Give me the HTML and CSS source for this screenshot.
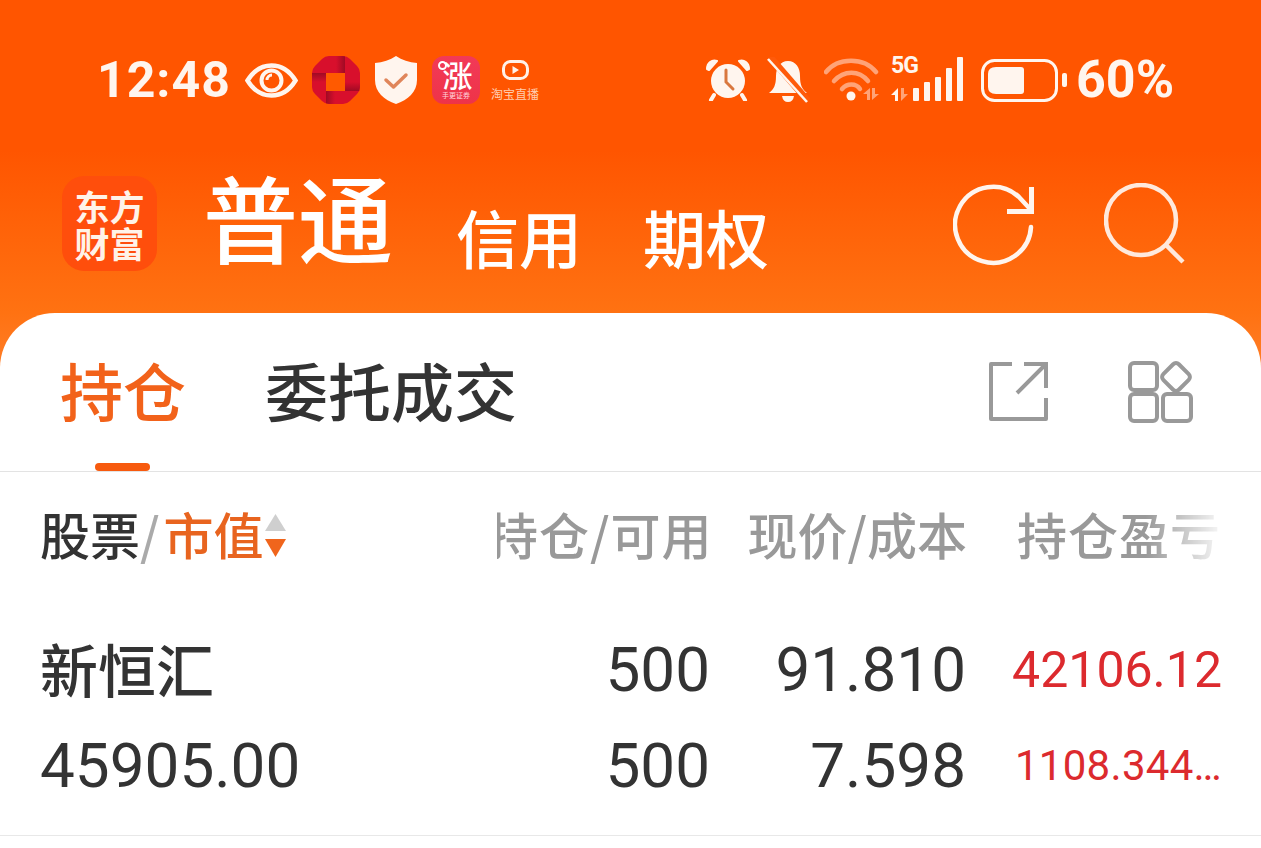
FILE: index.html
```html
<!DOCTYPE html>
<html lang="zh-CN">
<head>
<meta charset="utf-8">
<title>持仓</title>
<link rel="stylesheet" href="styles.css">
</head>
<body>
<div class="app">
  <header class="top">
    <div class="status">
      <div class="status-left">
        <span class="time">12:48</span>
        <svg class="i-eye" viewBox="0 0 53 35"><path d="M2.500 17.500C9 7 17 2.500 26.500 2.500S44 7 50.500 17.500C44 28 36 32.500 26.500 32.500S9 28 2.500 17.500Z" fill="none" stroke="#fff5ee" stroke-width="4.500"/><circle cx="26.500" cy="17.500" r="10" fill="none" stroke="#fff5ee" stroke-width="4"/><path d="M22 17a5 5 0 0 1 5-5" fill="none" stroke="#fff5ee" stroke-width="3"/></svg>
        <svg class="i-bank" viewBox="0 0 48 48">
          <defs>
            <clipPath id="bk-clip"><path d="M17 0H31Q35 0 38 3L45 10Q48 13 48 17V31Q48 35 45 38L38 45Q35 48 31 48H17Q13 48 10 45L3 38Q0 35 0 31V17Q0 13 3 10L10 3Q13 0 17 0Z"/></clipPath>
            <linearGradient id="bk-h" x1="0" y1="0" x2="1" y2="0"><stop offset="0" stop-color="#a00a24" stop-opacity="0"/><stop offset="1" stop-color="#a00a24"/></linearGradient>
            <linearGradient id="bk-h2" x1="0" y1="0" x2="1" y2="0"><stop offset="0" stop-color="#a00a24"/><stop offset="1" stop-color="#a00a24" stop-opacity="0"/></linearGradient>
            <linearGradient id="bk-v" x1="0" y1="0" x2="0" y2="1"><stop offset="0" stop-color="#a00a24" stop-opacity="0"/><stop offset="1" stop-color="#a00a24"/></linearGradient>
            <linearGradient id="bk-v2" x1="0" y1="0" x2="0" y2="1"><stop offset="0" stop-color="#a00a24"/><stop offset="1" stop-color="#a00a24" stop-opacity="0"/></linearGradient>
          </defs>
          <g clip-path="url(#bk-clip)">
            <rect width="48" height="48" fill="#d80f2c"/>
            <rect x="24" y="0" width="9" height="17" fill="url(#bk-h)"/>
            <rect x="33" y="26" width="15" height="9" fill="url(#bk-v)"/>
            <rect x="14" y="35" width="9" height="13" fill="url(#bk-h2)"/>
            <rect x="0" y="17" width="14" height="9" fill="url(#bk-v2)"/>
          </g>
          <rect class="bank-hole" x="14" y="17" width="19" height="18"/>
        </svg>
        <svg class="i-shield" viewBox="0 0 42 48"><path d="M21 0C27 4 34 6.500 42 7V24C42 36 33 44 21 48C9 44 0 36 0 24V7C8 6.500 15 4 21 0Z" fill="#fff5ee"/><path d="M11 24L18.500 31L31 19" fill="none" stroke="#e0855a" stroke-width="3.500" stroke-linecap="round" stroke-linejoin="round"/></svg>
        <div class="zhang"><span class="zhang-dot"></span><span class="zhang-big">涨</span><span class="zhang-small">手更证券</span></div>
        <div class="taobao">
          <svg class="i-live" viewBox="0 0 27 20"><rect x="1.500" y="1.500" width="24" height="17" rx="7" fill="none" stroke="#fff1e8" stroke-width="3"/><path d="M10.500 6L17 10L10.500 14Z" fill="#fff1e8"/></svg>
          <span class="taobao-text">淘宝直播</span>
        </div>
      </div>
      <div class="status-right">
        <svg class="i-clock" viewBox="0 0 44 42"><path d="M1 10C1 4 6 0 11 2L3 11Z M43 10C43 4 38 0 33 2L41 11Z" fill="#fff5ee" stroke="#fff5ee" stroke-width="2" stroke-linejoin="round"/><circle cx="22" cy="22" r="17" fill="#fff5ee"/><path d="M8 36L5 41M36 36L39 41" stroke="#fff5ee" stroke-width="4" stroke-linecap="round"/><path d="M20 11V23L27 30" fill="none" stroke="#d9773e" stroke-width="3" stroke-linecap="round"/></svg>
        <svg class="i-bell" viewBox="0 0 44 46"><path d="M22 4C30 4 34 11 34 19C34 28 36 32 41 36H3C8 32 10 28 10 19C10 11 14 4 22 4Z" fill="#fff5ee"/><path d="M16 39H28Q27 45 22 45T16 39Z" fill="#fff5ee"/><path d="M4 0L42 44" stroke="#ff5a0a" stroke-width="7"/><path d="M2 2L41 45" stroke="#fff5ee" stroke-width="2.600"/></svg>
        <svg class="i-wifi" viewBox="0 0 55 44"><g fill="none" stroke="#ffa377" stroke-width="4.500" stroke-linecap="round"><path d="M2 14C14 -1 40 -1 52 14"/><path d="M10 23C20 12 35 12 44 23"/><path d="M18 31C23 25 32 25 36 31"/></g><circle cx="27" cy="38" r="4.500" fill="#fff5ee"/><path d="M46 30V42H43V36H39ZM48 42V30H51V36H55Z" fill="#ffa377"/></svg>
        <div class="cell">
          <span class="cell-5g">5G</span>
          <svg class="i-cell" viewBox="0 0 72 45"><path d="M7 31V44H4V38H0Z" fill="#fff5ee"/><path d="M10 44V31H13V37H17Z" fill="#ffa377"/><g fill="#fff5ee"><rect x="22" y="31" width="6" height="13" rx="1"/><rect x="33" y="25" width="6" height="19" rx="1"/><rect x="44" y="20" width="6" height="24" rx="1"/><rect x="55" y="11" width="6" height="33" rx="1"/><rect x="66" y="0" width="6" height="44" rx="1"/></g></svg>
        </div>
        <svg class="i-batt" viewBox="0 0 87 43"><rect x="1.500" y="1.500" width="74" height="40" rx="12" fill="none" stroke="#fff5ee" stroke-width="3"/><path d="M15 8H40Q43 8 43 11V32Q43 35 40 35H15Q7 35 7 28V15Q7 8 15 8Z" fill="#fff5ee"/><rect x="81" y="14" width="5" height="14" rx="2" fill="#fff5ee"/></svg>
        <span class="pct">60%</span>
      </div>
    </div>
    <nav class="nav">
      <div class="logo"><span>东方</span><span>财富</span></div>
      <span class="nav-main">普通</span>
      <span class="nav-sub nav-credit">信用</span>
      <span class="nav-sub nav-option">期权</span>
      <div class="nav-icons">
        <svg class="i-refresh" viewBox="0 0 82 83"><path d="M78 44A38 38 0 1 1 66 14L78 27" fill="none" stroke="#fff5ee" stroke-width="4.500" stroke-linecap="round"/><path d="M78.500 4V28.500H54" fill="none" stroke="#fff5ee" stroke-width="5"/></svg>
        <svg class="i-search" viewBox="0 0 81 81"><circle cx="37" cy="37" r="35" fill="none" stroke="#ffe9dc" stroke-width="4.500"/><path d="M62 62L79 79" stroke="#ffe9dc" stroke-width="4.500"/></svg>
      </div>
    </nav>
  </header>

  <main class="panel">
    <div class="tabs">
      <div class="tab tab-on">持仓<span class="tab-bar"></span></div>
      <div class="tab">委托成交</div>
      <div class="tab-icons">
        <svg class="i-share" viewBox="0 0 61 61"><path d="M24 3H3V58H58V37" fill="none" stroke="#999" stroke-width="4" stroke-linejoin="round"/><path d="M36 3H58V27M58 3L29 32" fill="none" stroke="#999" stroke-width="4"/></svg>
        <svg class="i-apps" viewBox="0 0 65 62"><g fill="none" stroke="#999" stroke-width="4"><rect x="2" y="2" width="27" height="27" rx="4"/><rect x="2" y="33" width="27" height="27" rx="4"/><rect x="35" y="33" width="28" height="27" rx="4"/><rect x="37" y="5" width="22" height="22" rx="4" transform="rotate(45 48 16)"/></g></svg>
      </div>
    </div>

    <div class="table-head">
      <div class="head-name">股票<span class="slash">/</span><span class="head-sort">市值</span>
        <svg class="i-sort" viewBox="0 0 23 44"><path d="M11.500 1L22 18H1Z" fill="#cfcfcf"/><path d="M1 26H22L11.500 44Z" fill="#f0651c"/></svg>
      </div>
      <div class="head-scroll">
        <span class="h-col h1">持仓/可用</span>
        <span class="h-col h2">现价/成本</span>
        <span class="h-col h3">持仓盈亏</span>
      </div>
    </div>

    <div class="row">
      <div class="name">新恒汇</div>
      <div class="num">500</div>
      <div class="num">91.810</div>
      <div class="gain">42106.12</div>
      <div class="mv">45905.00</div>
      <div class="num">500</div>
      <div class="num">7.598</div>
      <div class="gain gain-small">1108.344…</div>
    </div>
  </main>
</div>
</body>
</html>
```
FILE: styles.css
```css
* { box-sizing: border-box; }
html, body { margin: 0; padding: 0; background: #fff; }
body {
  font-family: "Noto Sans CJK SC", Roboto, sans-serif;
  overflow: hidden;
}
.app {
  width: 1261px;
  height: 848px;
  overflow: hidden;
  background: linear-gradient(180deg, #ff5500 0, #ff5500 150px, #ff7212 313px, #ff7e28 370px, #ff7e28 100%);
}
svg { display: block; flex: none; }

.top { height: 313px; }
.status {
  height: 160px;
  padding: 56px 89px 0 97px;
  display: flex;
  justify-content: space-between;
  align-items: flex-start;
  color: #fff5ee;
}
.status-left, .status-right { display: flex; align-items: center; height: 48px; }
.time {
  font: 700 50px/48px Roboto, sans-serif;
  letter-spacing: 1px;
  width: 148px;
}
.i-eye { width: 53px; height: 35px; }
.i-bank { width: 48px; height: 48px; margin-left: 14px; }
.bank-hole { fill: #ff5a00; }
.i-shield { width: 42px; height: 48px; margin-left: 15px; }
.zhang {
  position: relative;
  width: 48px; height: 48px; margin-left: 15px;
  border-radius: 12px;
  background: linear-gradient(180deg, #f23a58, #ee3348);
  color: #fff;
  display: flex; flex-direction: column; align-items: center;
}
.zhang-dot {
  position: absolute; left: 6px; top: 5px;
  width: 9px; height: 9px; border-radius: 50%;
  border: 2px solid #fff;
}
.zhang-big { font-size: 30px; line-height: 34px; font-weight: 500; margin-left: 3px; margin-top: 1px; }
.zhang-small { font-size: 7px; line-height: 9px; white-space: nowrap; color: #ffd5dc; }
.taobao {
  width: 50px; margin-left: 10px;
  display: flex; flex-direction: column; align-items: center;
  gap: 7px;
  padding-top: 1px;
}
.i-live { width: 27px; height: 20px; }
.taobao-text { font-size: 12px; line-height: 14px; white-space: nowrap; color: #ffcdb0; }
.i-clock { width: 44px; height: 42px; margin-left: 1px; }
.i-bell { width: 44px; height: 46px; margin-left: 16px; }
.i-wifi { width: 55px; height: 44px; margin-left: 14px; }
.cell { width: 72px; height: 46px; margin-left: 12px; position: relative; }
.i-cell { width: 72px; height: 45px; }
.cell-5g {
  position: absolute; left: 0; top: -1px;
  font: 700 23px/20px Roboto, sans-serif;
  letter-spacing: -1px;
}
.i-batt { width: 87px; height: 43px; margin-left: 18px; }
.pct {
  font: 700 52px/48px Roboto, sans-serif;
  margin-left: 8px;
  width: 96px;
  white-space: nowrap;
}

.nav {
  height: 114px;
  padding: 16px 76px 0 62px;
  display: flex;
  align-items: flex-start;
  color: #fff;
}
.logo {
  width: 95px; height: 95px;
  border-radius: 22px;
  background: #ff4e0c;
  display: flex; flex-direction: column; align-items: center; justify-content: center;
  font-size: 35px; line-height: 37px; font-weight: 700;
  color: #fff3e8;
}
.nav-main { font-size: 95px; line-height: 100px; font-weight: 500; margin-left: 46px; margin-top: -10px; }
.nav-sub { font-size: 63px; line-height: 70px; font-weight: 500; margin-top: 25px; }
.nav-credit { margin-left: 63px; }
.nav-option { margin-left: 61px; }
.nav-icons { display: flex; margin-left: auto; gap: 69px; margin-top: 7px; }
.i-refresh { width: 82px; height: 83px; }
.i-search { width: 81px; height: 81px; }

.panel {
  height: 535px;
  background: #fff;
  border-radius: 55px 55px 0 0;
  overflow: hidden;
}
.tabs {
  height: 159px;
  border-bottom: 1px solid #e3e3e3;
  padding: 0 68px 0 60px;
  display: flex;
  align-items: flex-start;
}
.tab {
  position: relative;
  font-size: 63px; line-height: 90px; color: #333; font-weight: 500;
  margin-top: 31px;
  margin-right: 79px;
}
.tab-on { color: #f2621a; }
.tab-bar {
  position: absolute; left: 35px; bottom: -37px;
  width: 55px; height: 8px; border-radius: 4px;
  background: #f75a0e;
}
.tab-icons { display: flex; margin-left: auto; gap: 79px; margin-top: 48px; }
.i-share { width: 61px; height: 61px; }
.i-apps { width: 65px; height: 62px; }

.table-head {
  height: 150px;
  padding: 0 40px;
  display: flex;
  align-items: flex-start;
  font-size: 50px;
  line-height: 70px;
  font-weight: 500;
}
.head-name {
  width: 457px;
  margin-top: 26px;
  color: #333;
  display: flex;
  align-items: center;
  height: 70px;
  white-space: nowrap;
}
.slash { color: #aaa; padding-right: 4px; }
.head-sort { color: #e8641f; }
.i-sort { width: 23px; height: 44px; margin-top: 4px; }
.head-scroll {
  flex: 1;
  margin-top: 26px;
  height: 70px;
  overflow: hidden;
  display: flex;
  justify-content: flex-end;
  color: #999;
  -webkit-mask-image: linear-gradient(90deg, #000 calc(100% - 75px), rgba(0,0,0,.08) 100%);
  mask-image: linear-gradient(90deg, #000 calc(100% - 75px), rgba(0,0,0,.08) 100%);
  white-space: nowrap;
}
.h-col { flex: none; }
.h1 { margin-right: 35px; letter-spacing: 1px; }
.h2 { margin-right: 50px; }
.h3 { letter-spacing: 1px; }

.row {
  height: 214px;
  padding: 0 39px 0 40px;
  border-bottom: 1px solid #e8e8e8;
  display: grid;
  grid-template-columns: 1fr 200px 256px 256px;
  grid-template-rows: 96px 96px;
  align-items: center;
  color: #333;
  white-space: nowrap;
}
.name { font-size: 58px; line-height: 96px; font-weight: 500; margin-top: -4px; }
.mv, .num { font: 400 62px/96px Roboto, sans-serif; }
.num { text-align: right; }
.gain { font: 400 50px/96px Roboto, sans-serif; color: #dc2a2e; text-align: right; }
.gain-small { font-size: 42px; letter-spacing: .3px; }
```
